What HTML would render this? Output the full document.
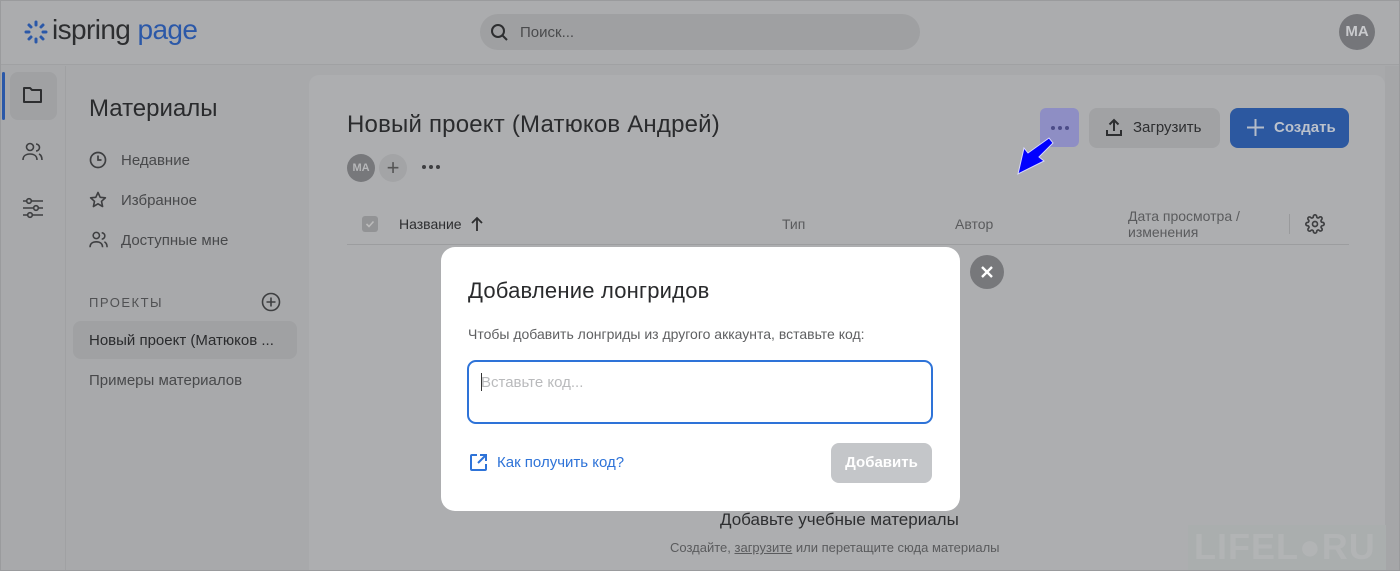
<!DOCTYPE html>
<html><head><meta charset="utf-8"><style>
*{box-sizing:border-box;margin:0;padding:0}
body{width:1400px;height:571px;overflow:hidden;background:#a8a9ab;font-family:"Liberation Sans",sans-serif;position:relative;color:#2a2b2d}
.abs{position:absolute}
#frame{position:absolute;left:0;top:0;width:1400px;height:571px;border:1px solid #9a9b9d;pointer-events:none;z-index:50}
#header{left:0;top:0;width:1400px;height:65px;background:#abacae;border-bottom:1px solid #a0a1a3}
.t{position:absolute;white-space:nowrap}
</style></head><body>
<div id="frame"></div>
<div class="abs" id="header"></div>
<!-- logo -->
<svg class="abs" style="left:24px;top:20px" width="24" height="24" viewBox="0 0 24 24"><g stroke="#2b58a8" stroke-width="3" stroke-linecap="round">
<path d="M12 2v3M12 19v3M2 12h3M19 12h3M5 5l2 2M17 17l2 2M19 5l-2 2M5 19l2-2"/></g></svg>
<div class="t" style="left:52px;top:14px;font-size:28px;color:#2d2e30;letter-spacing:-0.6px">ispring <span style="color:#2b58a8">page</span></div>
<!-- search -->
<div class="abs" style="left:480px;top:14px;width:440px;height:36px;border-radius:18px;background:#9fa0a2"></div>
<svg class="abs" style="left:490px;top:23px" width="20" height="20" viewBox="0 0 20 20"><circle cx="8" cy="8" r="6" fill="none" stroke="#2d2e30" stroke-width="2"/><path d="M12.5 12.5L17 17" stroke="#2d2e30" stroke-width="2"/></svg>
<div class="t" style="left:520px;top:24px;font-size:15px;color:#4a4b4d">Поиск...</div>
<div class="abs" style="left:1339px;top:14px;width:36px;height:36px;border-radius:50%;background:#75767a;color:#c9cacd;font-size:15px;font-weight:bold;text-align:center;line-height:36px">MA</div>
<!-- left rail -->
<div class="abs" style="left:0;top:66px;width:66px;height:505px;border-right:1px solid #a0a1a3"></div>
<div class="abs" style="left:2px;top:72px;width:3px;height:48px;background:#2b58a8;border-radius:2px"></div>
<div class="abs" style="left:10px;top:72px;width:47px;height:48px;background:#a0a1a3;border-radius:8px"></div>
<svg class="abs" style="left:22px;top:85px" width="22" height="20" viewBox="0 0 22 20"><path d="M2 3h6l2 2h9v12H2z" fill="none" stroke="#2d2e30" stroke-width="2" stroke-linejoin="round"/></svg>
<svg class="abs" style="left:22px;top:142px" width="22" height="20" viewBox="0 0 22 20" fill="none" stroke="#3e3f41" stroke-width="1.6"><circle cx="8" cy="5" r="3.5"/><path d="M1 18c0-4 3-6 7-6s7 2 7 6"/><path d="M14 2a3.5 3.5 0 010 7M17 12c2 1 3 3 3 6"/></svg>
<svg class="abs" style="left:22px;top:197px" width="22" height="22" viewBox="0 0 22 22" fill="none" stroke="#3e3f41" stroke-width="1.6"><path d="M1 4h20M1 11h20M1 18h20"/><circle cx="7" cy="4" r="2.3" fill="#a8a9ab"/><circle cx="14" cy="11" r="2.3" fill="#a8a9ab"/><circle cx="8" cy="18" r="2.3" fill="#a8a9ab"/></svg>
<!-- sidebar -->
<div class="t" style="left:89px;top:95px;font-size:24px;color:#2a2b2d">Материалы</div>
<svg class="abs" style="left:89px;top:151px" width="18" height="18" viewBox="0 0 18 18" fill="none" stroke="#3e3f41" stroke-width="1.7"><circle cx="9" cy="9" r="7.5"/><path d="M9 4.5V9h3.5"/></svg>
<div class="t" style="left:121px;top:152px;font-size:15px;color:#48494b">Недавние</div>
<svg class="abs" style="left:89px;top:191px" width="18" height="18" viewBox="0 0 18 18"><path d="M9 1.5l2.2 4.8 5.2.5-3.9 3.5 1.1 5.2L9 12.8l-4.6 2.7 1.1-5.2L1.6 6.8l5.2-.5z" fill="none" stroke="#3e3f41" stroke-width="1.6" stroke-linejoin="round"/></svg>
<div class="t" style="left:121px;top:192px;font-size:15px;color:#48494b">Избранное</div>
<svg class="abs" style="left:89px;top:231px" width="20" height="18" viewBox="0 0 22 20" fill="none" stroke="#3e3f41" stroke-width="1.7"><circle cx="8" cy="5" r="3.5"/><path d="M1 18c0-4 3-6 7-6s7 2 7 6"/><path d="M14 2a3.5 3.5 0 010 7M17 12c2 1 3 3 3 6"/></svg>
<div class="t" style="left:121px;top:232px;font-size:15px;color:#48494b">Доступные мне</div>
<div class="t" style="left:89px;top:295px;font-size:13px;color:#505153;letter-spacing:1.5px">ПРОЕКТЫ</div>
<svg class="abs" style="left:261px;top:292px" width="20" height="20" viewBox="0 0 20 20" fill="none" stroke="#3e3f41" stroke-width="1.6"><circle cx="10" cy="10" r="8.5"/><path d="M10 5.5v9M5.5 10h9"/></svg>
<div class="abs" style="left:73px;top:321px;width:224px;height:38px;background:#a0a1a3;border-radius:8px"></div>
<div class="t" style="left:89px;top:332px;font-size:15px;color:#2a2b2d">Новый проект (Матюков ...</div>
<div class="t" style="left:89px;top:372px;font-size:15px;color:#48494b">Примеры материалов</div>
<!-- content panel -->
<div class="abs" style="left:309px;top:75px;width:1076px;height:496px;background:#adaeb0;border-radius:10px 10px 0 0"></div>
<div class="abs" style="left:1385px;top:66px;width:14px;height:505px;background:#a5a6a8"></div>
<div class="t" style="left:347px;top:111px;font-size:24px;color:#2a2b2d;letter-spacing:0.2px">Новый проект (Матюков Андрей)</div>
<div class="abs" style="left:347px;top:154px;width:28px;height:28px;border-radius:50%;background:#77787b;color:#b6b7b9;font-size:11px;font-weight:bold;text-align:center;line-height:28px">MA</div>
<div class="abs" style="left:379px;top:154px;width:28px;height:28px;border-radius:50%;background:#a3a4a6;color:#555;font-size:22px;text-align:center;line-height:27px">+</div>
<svg class="abs" style="left:421px;top:164px" width="20" height="6" viewBox="0 0 20 6" fill="#3e3f41"><circle cx="3" cy="3" r="2"/><circle cx="10" cy="3" r="2"/><circle cx="17" cy="3" r="2"/></svg>
<div class="abs" style="left:1040px;top:108px;width:39px;height:39px;border-radius:6px;background:#8e8ec4"></div>
<svg class="abs" style="left:1050px;top:125px" width="20" height="6" viewBox="0 0 20 6" fill="#4c4c88"><circle cx="3" cy="3" r="2"/><circle cx="10" cy="3" r="2"/><circle cx="17" cy="3" r="2"/></svg>
<div class="abs" style="left:1089px;top:108px;width:131px;height:40px;border-radius:8px;background:#a1a2a4"></div>
<svg class="abs" style="left:1105px;top:118px" width="18" height="19" viewBox="0 0 18 19" fill="none" stroke="#2d2e30" stroke-width="2"><path d="M9 13V2M4.5 6.5L9 2l4.5 4.5M2 12v5h14v-5"/></svg>
<div class="t" style="left:1133px;top:119px;font-size:15px;color:#2d2e30">Загрузить</div>
<div class="abs" style="left:1230px;top:108px;width:119px;height:40px;border-radius:8px;background:#2c58a0"></div>
<svg class="abs" style="left:1246px;top:118px" width="19" height="19" viewBox="0 0 19 19" stroke="#b5bcc9" stroke-width="2"><path d="M9.5 1v17M1 9.5h17"/></svg>
<div class="t" style="left:1274px;top:119px;font-size:15px;color:#bcc2cc;font-weight:bold">Создать</div>
<!-- arrow -->
<svg class="abs" style="left:1015px;top:136px" width="40" height="42" viewBox="0 0 40 42"><path d="M34 2l4 5-14 14 5 4L3 38l6-26 4 5z" fill="#0000ff" stroke="#d8d8ff" stroke-width="1"/></svg>
<!-- table header -->
<div class="abs" style="left:362px;top:216px;width:16px;height:16px;border-radius:3px;background:#929395"></div>
<svg class="abs" style="left:364px;top:218px" width="12" height="12" viewBox="0 0 12 12"><path d="M2.5 6l2.5 2.5 4.5-5" fill="none" stroke="#bbb" stroke-width="1.6"/></svg>
<div class="t" style="left:399px;top:216px;font-size:14px;color:#2d2e30">Название</div>
<svg class="abs" style="left:470px;top:216px" width="14" height="16" viewBox="0 0 14 16" fill="none" stroke="#2d2e30" stroke-width="1.8"><path d="M7 15V2M2 7l5-5 5 5"/></svg>
<div class="t" style="left:782px;top:216px;font-size:14px;color:#5a5b5d">Тип</div>
<div class="t" style="left:955px;top:216px;font-size:14px;color:#5a5b5d">Автор</div>
<div class="t" style="left:1128px;top:208px;font-size:14px;color:#5a5b5d;line-height:16px">Дата просмотра /<br>изменения</div>
<div class="abs" style="left:1289px;top:214px;width:1px;height:20px;background:#999a9c"></div>
<svg class="abs" style="left:1305px;top:214px" width="20" height="20" viewBox="0 0 24 24" fill="none" stroke="#3e3f41" stroke-width="2"><circle cx="12" cy="12" r="3"/><path d="M19.4 15a1.7 1.7 0 00.3 1.8l.1.1a2 2 0 11-2.8 2.8l-.1-.1a1.7 1.7 0 00-1.8-.3 1.7 1.7 0 00-1 1.5V21a2 2 0 11-4 0v-.1a1.7 1.7 0 00-1.1-1.5 1.7 1.7 0 00-1.8.3l-.1.1a2 2 0 11-2.8-2.8l.1-.1a1.7 1.7 0 00.3-1.8 1.7 1.7 0 00-1.5-1H3a2 2 0 110-4h.1a1.7 1.7 0 001.5-1.1 1.7 1.7 0 00-.3-1.8l-.1-.1a2 2 0 112.8-2.8l.1.1a1.7 1.7 0 001.8.3H9a1.7 1.7 0 001-1.5V3a2 2 0 114 0v.1a1.7 1.7 0 001 1.5 1.7 1.7 0 001.8-.3l.1-.1a2 2 0 112.8 2.8l-.1.1a1.7 1.7 0 00-.3 1.8V9a1.7 1.7 0 001.5 1H21a2 2 0 110 4h-.1a1.7 1.7 0 00-1.5 1z"/></svg>
<div class="abs" style="left:347px;top:244px;width:1002px;height:1px;background:#9c9d9f"></div>
<div class="t" style="left:720px;top:510px;font-size:17px;color:#2d2e30">Добавьте учебные материалы</div>
<div class="t" style="left:670px;top:540px;font-size:13px;color:#5a5b5d">Создайте, <u>загрузите</u> или перетащите сюда материалы</div>
<div class="abs" style="left:1188px;top:525px;width:198px;height:46px;background:#aaaeae"></div>
<div class="t" style="left:1194px;top:526px;font-size:36px;font-weight:bold;color:#b2b4b5;letter-spacing:1px">LIFEL<span>●</span>RU</div>
<!-- modal -->
<div class="abs" style="left:441px;top:247px;width:519px;height:264px;background:#fff;border-radius:14px"></div>
<div class="abs" style="left:970px;top:255px;width:34px;height:34px;border-radius:50%;background:#77787b"></div>
<svg class="abs" style="left:979px;top:264px" width="16" height="16" viewBox="0 0 16 16" stroke="#fff" stroke-width="2.4"><path d="M3 3l10 10M13 3L3 13"/></svg>
<div class="t" style="left:468px;top:278px;font-size:22px;color:#2a2b2d;letter-spacing:0.2px">Добавление лонгридов</div>
<div class="t" style="left:468px;top:326px;font-size:14px;color:#5f6062">Чтобы добавить лонгриды из другого аккаунта, вставьте код:</div>
<div class="abs" style="left:467px;top:360px;width:466px;height:64px;border:2px solid #2e73d8;border-radius:9px"></div>
<div class="abs" style="left:481px;top:373px;width:1px;height:18px;background:#333"></div>
<div class="t" style="left:481px;top:374px;font-size:15px;color:#b9babc">Вставьте код...</div>
<svg class="abs" style="left:469px;top:453px" width="19" height="19" viewBox="0 0 19 19" fill="none" stroke="#2e73d8" stroke-width="2"><path d="M8 2H3a1 1 0 00-1 1v13a1 1 0 001 1h13a1 1 0 001-1v-5"/><path d="M11 2h6v6M17 2L9 10"/></svg>
<div class="t" style="left:497px;top:454px;font-size:15px;color:#2e73d8">Как получить код?</div>
<div class="abs" style="left:831px;top:443px;width:101px;height:40px;border-radius:8px;background:#c4c6c9;color:#fff;font-size:15px;font-weight:bold;text-align:center;line-height:40px">Добавить</div>
</body></html>
